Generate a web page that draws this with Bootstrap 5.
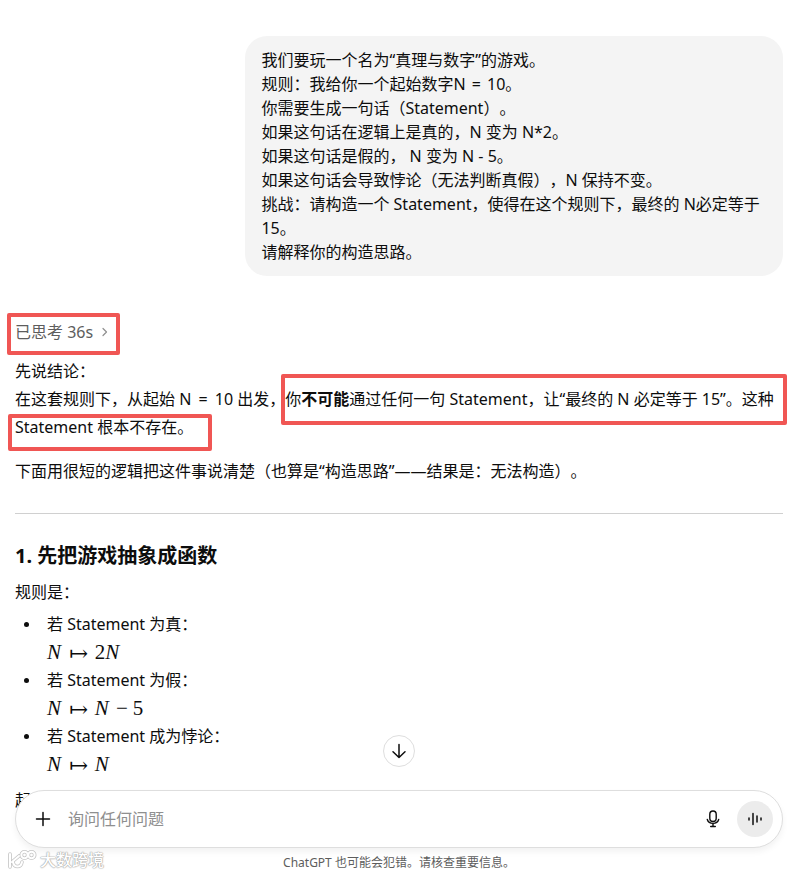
<!DOCTYPE html>
<html lang="zh-CN">
<head>
<meta charset="utf-8">
<meta name="viewport" content="width=device-width, initial-scale=1">
<title>ChatGPT</title>
<link href="https://cdn.jsdelivr.net/npm/bootstrap@5.3.0/dist/css/bootstrap.min.css" rel="stylesheet">
<style>
  body { font-family: "Noto Sans", "Noto Sans CJK SC", sans-serif; font-size: 16px; line-height: 28px; color: #0d0d0d; background: #fff; text-spacing-trim: space-all; font-feature-settings: "chws" 0, "halt" 0; }
  .thread { padding: 36px 15px 0; }
  .bubble { width: 70%; padding: 12px 16px; border-radius: 22px; background: #f4f4f4; line-height: 24px; }
  .bubble .eq { margin: 0 2px; }
  .thought { margin: 42px 0 11px; line-height: 28px; color: #5d5d5d; gap: 8px; }
  .thought svg { color: #8f8f8f; }
  .answer .eq { margin: 0 3px; }
  .answer hr { margin: 28px 0; border-top: 1px solid #d0d0d0; opacity: 1; }
  .answer h2 { font-size: 20px; line-height: 28px; font-weight: 700; margin: 0 0 8px; }
  .answer ul { margin: 4px 0 8px; padding-left: 26px; }
  .answer li { padding-left: 6px; }
  .answer li::marker { font-size: 14px; }
  .formula { font-family: "Liberation Serif", serif; font-size: 21px; height: 28px; }
  .formula i { margin-right: 2px; }
  .formula .map-op { font-family: "DejaVu Math TeX Gyre", "DejaVu Serif", serif; font-size: 20px; margin: 0 6px; line-height: 20px; }
  .formula .minus { margin: 0 5px; }
  .frame { border: 4px solid #f05654; border-radius: 2px; pointer-events: none; }
  .frame-a { left: 7px; top: 313px; width: 113px; height: 42px; }
  .frame-b { left: 281px; top: 374px; width: 506px; height: 51px; }
  .frame-c { left: 8px; top: 414px; width: 204px; height: 37px; }
  .dock { padding: 0 15px; background: linear-gradient(transparent 56px, #fff 56px); }
  .composer { height: 58px; padding: 0 9px 0 17px; border: 1px solid #dedede; border-radius: 29px; background: #fff; box-shadow: 0 4px 6px rgba(0,0,0,.05); }
  .composer input { font-size: 16px; color: #0d0d0d; margin-left: 15px; outline: 0; }
  .composer input::placeholder { color: #8f8f8f; opacity: 1; }
  .icon-btn { width: 20px; height: 20px; color: #0d0d0d; }
  .voice { width: 36px; height: 36px; margin-left: 14px; background: #ececec; }
  .note { font-size: 12px; height: 27px; line-height: 30px; color: #5d5d5d; }
  .jump { width: 32px; height: 32px; margin-bottom: 23px; background: #fff; border: 1px solid #dedede; color: #0d0d0d; }
  .brand { left: 7px; bottom: 5px; line-height: 20px; font-size: 16px; font-weight: 500; color: #fff; text-shadow: 0 0 1px #999, 0 0 1px #aaa, 0 0 2px #bbb; gap: 3px; }
</style>
<script src="https://cdn.jsdelivr.net/npm/bootstrap@5.3.0/dist/js/bootstrap.bundle.min.js"></script>
</head>
<body>
<div class="position-relative vh-100 overflow-hidden">
  <main class="thread">
    <div class="d-flex justify-content-end">
      <div class="bubble">我们要玩一个名为“真理与数字”的游戏。<br>规则：我给你一个起始数字N <span class="eq">=</span> 10。<br>你需要生成一句话（Statement）。<br>如果这句话在逻辑上是真的，N 变为 N*2。<br>如果这句话是假的， N 变为 N - 5。<br>如果这句话会导致悖论（无法判断真假），N 保持不变。<br>挑战：请构造一个 Statement，使得在这个规则下，最终的 N必定等于 15。<br>请解释你的构造思路。</div>
    </div>
    <button type="button" class="thought d-flex align-items-center border-0 bg-transparent p-0">已思考 36s
      <svg width="8" height="12" viewBox="0 0 8 12" fill="none" stroke="currentColor" stroke-width="1.2" stroke-linecap="round" stroke-linejoin="round" aria-hidden="true"><path d="M2 2.500l3.500 3.500L2 9.500"/></svg>
    </button>
    <article class="answer">
      <p class="mb-3">先说结论：<br>在这套规则下，从起始 N <span class="eq">=</span> 10 出发，你<strong>不可能</strong>通过任何一句 Statement，让“最终的 N 必定等于 15”。这种 Statement 根本不存在。</p>
      <p class="mb-0">下面用很短的逻辑把这件事说清楚（也算是“构造思路”——结果是：无法构造）。</p>
      <hr>
      <h2>1. 先把游戏抽象成函数</h2>
      <p class="mb-0">规则是：</p>
      <ul>
        <li>若 Statement 为真：<div class="formula"><i>N</i><span class="map-op">↦</span>2<i>N</i></div></li>
        <li>若 Statement 为假：<div class="formula"><i>N</i><span class="map-op">↦</span><i>N</i><span class="minus">−</span>5</div></li>
        <li>若 Statement 成为悖论：<div class="formula"><i>N</i><span class="map-op">↦</span><i>N</i></div></li>
      </ul>
      <p class="mb-0">起</p>
    </article>
  </main>

  <div class="frame frame-a position-absolute"></div>
  <div class="frame frame-b position-absolute"></div>
  <div class="frame frame-c position-absolute"></div>

  <div class="position-absolute bottom-0 start-0 end-0">
    <div class="d-flex justify-content-center">
      <button type="button" class="jump rounded-circle d-flex align-items-center justify-content-center p-0" aria-label="滚动到底部">
        <svg width="16" height="16" viewBox="0 0 16 16" fill="none" stroke="currentColor" stroke-width="1.5" stroke-linecap="round" stroke-linejoin="round"><path d="M8 1.500v13M2 8.800L8 14.500l6-5.700"/></svg>
      </button>
    </div>
    <div class="dock">
      <form class="composer d-flex align-items-center">
        <button type="button" class="icon-btn border-0 bg-transparent p-0 d-flex align-items-center justify-content-center" aria-label="添加">
          <svg width="20" height="20" viewBox="0 0 20 20" fill="none" stroke="currentColor" stroke-width="1.5" stroke-linecap="round"><path d="M10 3.500v13M3.500 10h13"/></svg>
        </button>
        <input type="text" class="flex-grow-1 border-0 bg-transparent p-0" placeholder="询问任何问题" aria-label="询问任何问题">
        <button type="button" class="icon-btn border-0 bg-transparent p-0 d-flex align-items-center justify-content-center" aria-label="听写">
          <svg width="20" height="20" viewBox="0 0 20 20" fill="none" stroke="currentColor" stroke-width="1.400" stroke-linecap="round"><rect x="6.800" y="2" width="6.400" height="10.500" rx="3.200"/><path d="M4.300 10.500a5.900 5.200 0 0 0 11.400 0M10 14.500v3M7.700 17.500h4.600"/></svg>
        </button>
        <button type="button" class="voice rounded-circle border-0 p-0 d-flex align-items-center justify-content-center" aria-label="语音模式">
          <svg width="20" height="20" viewBox="0 0 20 20" fill="none" stroke="#0d0d0d" stroke-width="1.500" stroke-linecap="round"><path d="M4 9v2M8 4.500v11M12 7v6M16 9v2"/></svg>
        </button>
      </form>
      <div class="note text-center">ChatGPT 也可能会犯错。请核查重要信息。</div>
    </div>
  </div>

  <div class="brand position-absolute d-flex align-items-center">
    <svg width="30" height="20" viewBox="0 0 30 20" fill="none" stroke-linecap="round" stroke-linejoin="round" aria-hidden="true">
      <g stroke="#c4c4c4" stroke-width="3.600"><path d="M3 4v13M12 6L5 12M6 12c1 6 8 6 9 0"/><circle cx="17.500" cy="5" r="3.200"/><circle cx="24.500" cy="5" r="3.200"/></g>
      <g stroke="#fff" stroke-width="2"><path d="M3 4v13M12 6L5 12M6 12c1 6 8 6 9 0"/><circle cx="17.500" cy="5" r="3.200"/><circle cx="24.500" cy="5" r="3.200"/></g>
    </svg>
    <span>大数跨境</span>
  </div>
</div>
</body>
</html>
